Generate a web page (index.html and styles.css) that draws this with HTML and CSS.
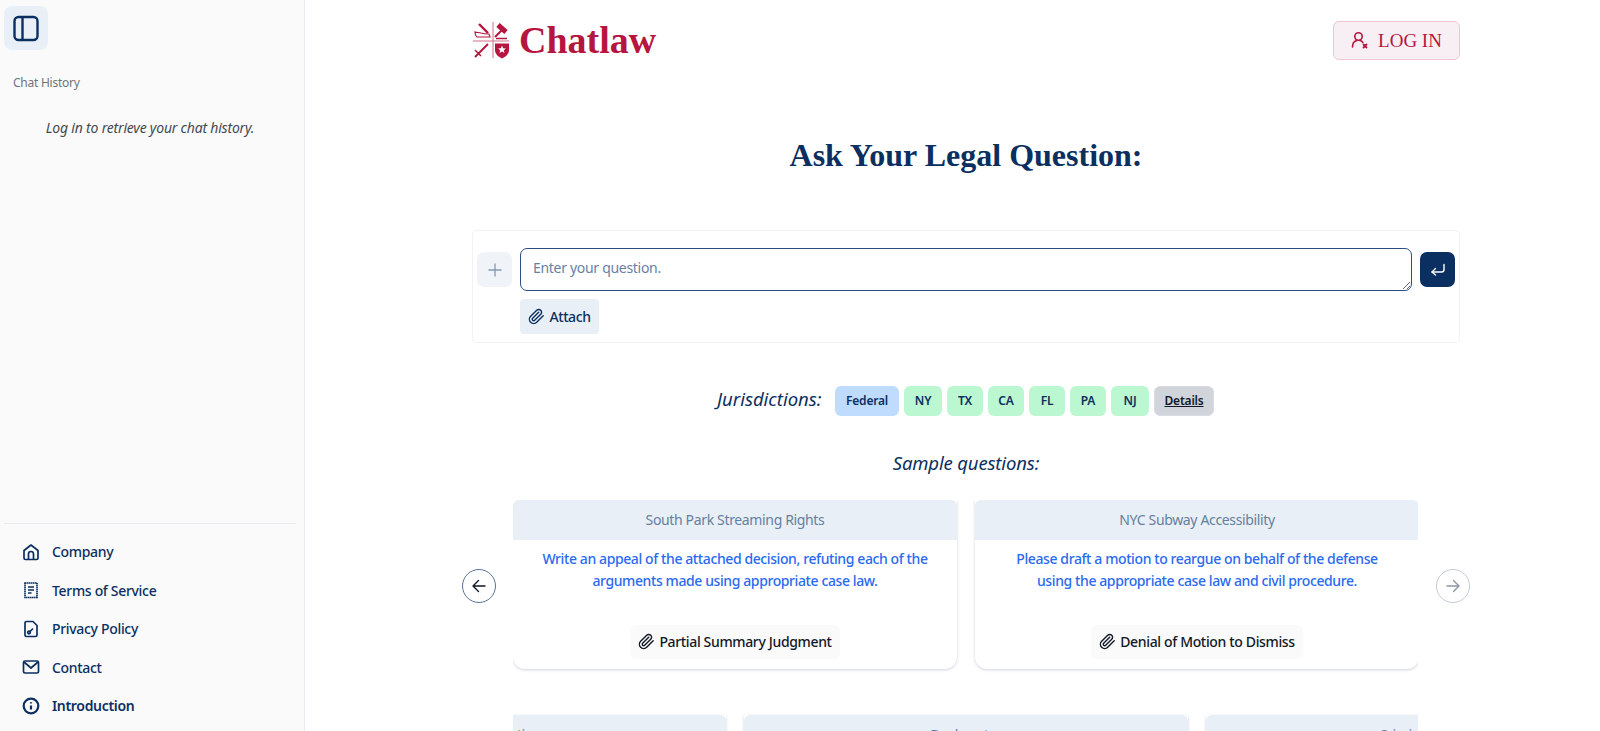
FILE: index.html
```html
<!DOCTYPE html>
<html lang="en">
<head>
  <meta charset="UTF-8">
  <title>Chatlaw</title>
  <link rel="stylesheet" href="styles.css">
</head>
<body>
  <aside class="sidebar">
    <div class="sidebar-top">
      <button class="toggle-btn">
        <svg width="28" height="28" viewBox="0 0 28 28" fill="none" stroke="#0b2f60" stroke-width="2.4"><rect x="2.5" y="3" width="23" height="23" rx="4"/><path d="M10.5 3v23"/></svg>
      </button>
      <div class="history-label">Chat History</div>
      <p class="history-empty">Log in to retrieve your chat history.</p>
    </div>
    <nav class="sidebar-nav">
      <a class="nav-item">
        <svg width="18" height="18" viewBox="0 0 18 18" fill="none" stroke="#0b2f60" stroke-width="1.7" stroke-linejoin="round"><path d="M2 7.5 9 2l7 5.500V15a1.500 1.500 0 0 1-1.500 1.500h-11A1.500 1.500 0 0 1 2 15z"/><path d="M6.500 16.500V11a2.500 2.500 0 0 1 5 0v5.500"/></svg>
        Company
      </a>
      <a class="nav-item">
        <svg width="18" height="18" viewBox="0 0 18 18" fill="none" stroke="#0b2f60" stroke-width="1.7"><path d="M3 2h12v14.500H3z" stroke-dasharray="1.600 .4"/><path d="M6 6h6M6 9h6M6 12h3.500"/></svg>
        Terms of Service
      </a>
      <a class="nav-item">
        <svg width="18" height="18" viewBox="0 0 18 18" fill="none" stroke="#0b2f60" stroke-width="1.7" stroke-linejoin="round"><path d="M4.500 1.500H11l4 4V15a1.500 1.500 0 0 1-1.500 1.500h-9A1.500 1.500 0 0 1 3 15V3a1.500 1.500 0 0 1 1.500-1.500z"/><circle cx="7" cy="12.500" r="1.300"/><path d="m8 11.500 3-3"/></svg>
        Privacy Policy
      </a>
      <a class="nav-item">
        <svg width="18" height="18" viewBox="0 0 18 18" fill="none" stroke="#0b2f60" stroke-width="1.7" stroke-linejoin="round"><rect x="1.500" y="3" width="15" height="12" rx="1.500"/><path d="m2 4 7 6 7-6"/></svg>
        Contact
      </a>
      <a class="nav-item nav-intro">
        <svg width="18" height="18" viewBox="0 0 18 18" fill="none" stroke="#0b2f60" stroke-width="2.2"><circle cx="9" cy="9" r="7.300"/><path d="M9 8.500v4M9 5.200v1.200"/></svg>
        Introduction
      </a>
    </nav>
  </aside>

  <main class="main">
    <header class="topbar">
      <div class="brand">
        <svg class="brand-mark" width="38" height="38" viewBox="1 0 38 38" fill="none" stroke="#b5153f">
          <path d="M22 1v36M2 20h36" stroke="#cf6f88" stroke-width="1"/>
          <path d="M4 11c2 1 4 0 6 1 2 .8 5 1 8 1l1 3H6c-1.500-1-2-3-2-5z" stroke-width="1.200"/>
          <path d="m8 3 9 9" stroke-width="2.400"/>
          <path d="m27 4 8 7" stroke-width="5"/>
          <path d="m31 9-7 7" stroke-width="2"/>
          <path d="M25 17.500h11" stroke-width="1.500"/>
          <path d="M17 23 4 36" stroke-width="2"/>
          <path d="m4 29 6 6" stroke-width="1.500"/>
          <path d="M24 22.500h14v6.500c0 4-3.500 7-7 8.500-3.500-1.500-7-4.500-7-8.500z" fill="#b5153f" stroke="none"/>
          <path d="m31 24.500 1.100 2.700 2.900.2-2.200 1.900.7 2.800-2.500-1.500-2.500 1.500.7-2.800-2.200-1.900 2.900-.2z" fill="#fff" stroke="none"/>
        </svg>
        <span class="brand-name">Chatlaw</span>
      </div>
      <button class="login-btn">
        <svg width="18" height="18" viewBox="0 0 18 18" fill="none" stroke="#b5153f" stroke-width="1.600" stroke-linecap="round"><circle cx="7.500" cy="5.500" r="3.700"/><path d="M1.500 16c0-3.500 2-6 4.500-6.500M9 9.500c1.300.3 2.200 1 2.800 2"/><path d="m12.500 13.500 3 3m0-3-3 3" stroke-width="1.800"/></svg>
        <span class="login-text">LOG IN</span>
      </button>
    </header>

    <h1 class="page-title">Ask Your Legal Question:</h1>

    <section class="ask-panel">
      <div class="ask-row">
        <button class="plus-btn">
          <svg width="16" height="16" viewBox="0 0 16 16" fill="none" stroke="#8298b5" stroke-width="1.300"><path d="M8 1.500v13M1.500 8h13"/></svg>
        </button>
        <textarea class="question-input" placeholder="Enter your question."></textarea>
        <button class="send-btn">
          <svg width="16" height="16" viewBox="0 0 16 16" fill="none" stroke="#fff" stroke-width="1.400" stroke-linecap="round" stroke-linejoin="round"><path d="M14 2.500v5a2.500 2.500 0 0 1-2.500 2.500H2"/><path d="M5.500 6.500 2 10l3.500 3"/></svg>
        </button>
      </div>
      <button class="attach-btn">
        <svg class="clip" width="17" height="17" viewBox="0 0 24 24" fill="none" stroke="currentColor" stroke-width="2" stroke-linecap="round" stroke-linejoin="round"><path d="m21.440 11.050-9.190 9.190a6 6 0 0 1-8.490-8.490l8.570-8.570A4 4 0 1 1 18 8.840l-8.590 8.570a2 2 0 0 1-2.830-2.830l8.490-8.480"/></svg>
        Attach
      </button>
    </section>

    <div class="jurisdictions">
      <span class="jur-label">Jurisdictions:</span>
      <span class="chip chip-federal">Federal</span>
      <span class="chip chip-state chip-ny">NY</span>
      <span class="chip chip-state">TX</span>
      <span class="chip chip-state">CA</span>
      <span class="chip chip-state">FL</span>
      <span class="chip chip-state">PA</span>
      <span class="chip chip-state chip-ny">NJ</span>
      <span class="chip chip-details">Details</span>
    </div>

    <h2 class="samples-title">Sample questions:</h2>

    <section class="carousel">
      <button class="arrow arrow-on">
        <svg width="16" height="16" viewBox="0 0 16 16" fill="none" stroke="currentColor" stroke-width="1.400" stroke-linecap="round" stroke-linejoin="round"><path d="M14 8H2M7.500 2.500 2 8l5.500 5.500"/></svg>
      </button>
      <div class="card-rows">
        <div class="card-row">
          <article class="card">
            <div class="card-head">South Park Streaming Rights</div>
            <p class="card-text">Write an appeal of the attached decision, refuting each of the arguments made using appropriate case law.</p>
            <span class="doc-tag">
              <svg width="17" height="17" viewBox="0 0 24 24" fill="none" stroke="currentColor" stroke-width="2" stroke-linecap="round" stroke-linejoin="round"><path d="m21.440 11.050-9.190 9.190a6 6 0 0 1-8.490-8.490l8.570-8.570A4 4 0 1 1 18 8.840l-8.590 8.570a2 2 0 0 1-2.830-2.830l8.490-8.480"/></svg>
              Partial Summary Judgment
            </span>
          </article>
          <article class="card">
            <div class="card-head">NYC Subway Accessibility</div>
            <p class="card-text">Please draft a motion to reargue on behalf of the defense using the appropriate case law and civil procedure.</p>
            <span class="doc-tag">
              <svg width="17" height="17" viewBox="0 0 24 24" fill="none" stroke="currentColor" stroke-width="2" stroke-linecap="round" stroke-linejoin="round"><path d="m21.440 11.050-9.190 9.190a6 6 0 0 1-8.490-8.490l8.570-8.570A4 4 0 1 1 18 8.840l-8.590 8.570a2 2 0 0 1-2.830-2.830l8.490-8.480"/></svg>
              Denial of Motion to Dismiss
            </span>
          </article>
        </div>
        <div class="card-row card-row-shifted">
          <article class="card"><div class="card-head">Class Action</div></article>
          <article class="card"><div class="card-head">Bankruptcy</div></article>
          <article class="card"><div class="card-head">Criminal Appeal</div></article>
        </div>
      </div>
      <button class="arrow arrow-off">
        <svg width="16" height="16" viewBox="0 0 16 16" fill="none" stroke="currentColor" stroke-width="1.400" stroke-linecap="round" stroke-linejoin="round"><path d="M2 8h12M8.500 2.500 14 8l-5.500 5.500"/></svg>
      </button>
    </section>
  </main>
</body>
</html>
```

FILE: styles.css
```css
* {
  box-sizing: border-box;
  margin: 0;
  padding: 0;
}

html, body {
  height: 731px;
  overflow: hidden;
}

body {
  display: flex;
  font-family: "Noto Sans", sans-serif;
  background: white;
  color: #0b2f60;
}

button {
  border: none;
  font-family: inherit;
  display: flex;
  align-items: center;
  justify-content: center;
}

/* sidebar */
.sidebar {
  width: 305px;
  flex-shrink: 0;
  height: 731px;
  background: #fafafa;
  border-right: 1px solid #e8edf5;
  padding: 6px 8px 0 4px;
  display: flex;
  flex-direction: column;
  justify-content: space-between;
}

.toggle-btn {
  width: 44px;
  height: 44px;
  border-radius: 8px;
  background: #e9eff6;
}

.history-label {
  margin: 25px 0 0 9px;
  font-size: 12px;
  line-height: 16px;
  letter-spacing: -0.25px;
  color: #6f7479;
}

.history-empty {
  margin-top: 27px;
  text-align: center;
  font-style: italic;
  font-size: 14px;
  line-height: 20px;
  letter-spacing: -0.2px;
  color: #45494f;
}

.sidebar-nav {
  border-top: 1px solid #e8ebef;
  padding: 9px 0 6px 18px;
}

.nav-item {
  height: 38.500px;
  display: flex;
  align-items: center;
  gap: 12px;
  font-size: 14px;
  font-weight: 500;
  letter-spacing: -0.32px;
  color: #0b2f60;
}

.nav-intro {
  font-weight: 600;
}

/* main column */
.main {
  flex: 1;
  padding: 0 139px 0 157px;
  min-width: 0;
}

.main > * {
  width: 1008px;
}

.topbar {
  height: 80px;
  width: 988px;
  margin-left: 10px;
  display: flex;
  align-items: center;
  justify-content: space-between;
}

.brand {
  display: flex;
  align-items: center;
  gap: 9px;
}

.brand-name {
  font-family: "Liberation Serif", serif;
  font-size: 38px;
  font-weight: 700;
  color: #b5153f;
}

.login-btn {
  width: 127px;
  height: 39px;
  gap: 9px;
  border: 1px solid #eec6d2;
  border-radius: 6px;
  background: #f7eff3;
  color: #b5153f;
  font-family: "Liberation Serif", serif;
  font-size: 19px;
}

.login-text {
  padding-top: 2px;
}

.page-title {
  margin: 54px 0 0;
  height: 42px;
  text-align: center;
  font-family: "Liberation Serif", serif;
  font-size: 32px;
  line-height: 42px;
  font-weight: 700;
  color: #0b2f60;
}

.ask-panel {
  width: 988px;
  margin: 54px 0 0 10px;
  height: 113px;
  border: 1px solid #f1f2f4;
  border-radius: 4px;
  padding: 17px 4px 0;
}

.ask-row {
  display: flex;
  gap: 8px;
  align-items: flex-start;
}

.plus-btn, .send-btn {
  width: 35px;
  height: 35px;
  border-radius: 7px;
  margin-top: 4px;
}

.plus-btn {
  background: #f0f4f8;
}

.send-btn {
  background: #0b2f60;
}

.question-input {
  flex: 1;
  height: 43px;
  border: 1px solid #2c4f80;
  border-radius: 7px;
  padding: 9px 12px;
  font-family: inherit;
  font-size: 14px;
  line-height: 20px;
  letter-spacing: -0.3px;
}

.question-input::placeholder {
  color: #6780a5;
}

.attach-btn {
  margin: 8px 0 0 43px;
  width: 79px;
  height: 35px;
  gap: 4px;
  padding-bottom: 1px;
  border-radius: 4px;
  background: #e9eff6;
  color: #0b2f60;
  font-size: 14px;
  font-weight: 500;
  letter-spacing: -0.4px;
}

.clip {
  flex-shrink: 0;
}

.jurisdictions {
  margin-top: 43px;
  height: 30px;
  display: flex;
  align-items: center;
  gap: 5px;
  padding-left: 255px;
}

.jur-label {
  font-size: 18.500px;
  font-style: italic;
  width: 113px;
  padding-bottom: 5px;
}

.chip {
  height: 30px;
  display: flex;
  align-items: center;
  justify-content: center;
  width: 36px;
  padding-bottom: 2px;
  border-radius: 6px;
  font-size: 12px;
  font-weight: 600;
  letter-spacing: -0.2px;
  color: #0b2f60;
}

.chip-federal {
  width: 64px;
  background: #bfdbfe;
}

.chip-state {
  background: #bbf7d0;
}

.chip-ny {
  width: 38px;
}

.chip-details {
  width: 60px;
  background: #d1d5db;
  border: 1px solid #d9dce1;
  color: #111827;
  text-decoration: underline;
}

.samples-title {
  margin-top: 32px;
  height: 30px;
  text-align: center;
  font-size: 18.500px;
  line-height: 30px;
  font-weight: 400;
  font-style: italic;
  letter-spacing: -0.15px;
}

/* carousel */
.carousel {
  margin-top: 22px;
  display: flex;
  align-items: flex-start;
  width: 1008px;
}

.arrow {
  width: 34px;
  height: 34px;
  margin-top: 69px;
  flex-shrink: 0;
  border-radius: 50%;
  background: white;
}

.arrow-on {
  border: 1px solid #5a7397;
  color: #111827;
}

.arrow-off {
  margin-left: 18px;
  border: 1px solid #c3ccd9;
  color: #8d96a3;
}

.card-rows {
  width: 905px;
  margin-left: 17px;
  overflow: hidden;
  padding-bottom: 10px;
  display: flex;
  flex-direction: column;
  gap: 46px;
}

.card-row {
  display: flex;
  gap: 18px;
}

.card-row-shifted {
  margin-left: -231px;
}

.card {
  width: 444px;
  height: 169px;
  flex-shrink: 0;
  background: white;
  border-radius: 0 0 12px 12px;
  box-shadow: 0 1px 3px rgba(30, 50, 90, 0.22);
  text-align: center;
}

.card-head {
  height: 40px;
  line-height: 39px;
  background: #e9eff6;
  border-radius: 6px 6px 0 0;
  font-size: 14px;
  letter-spacing: -0.35px;
  color: #64809f;
}

.card-text {
  height: 85px;
  padding: 8px 28px 0;
  font-size: 14px;
  line-height: 21.500px;
  font-weight: 500;
  letter-spacing: -0.4px;
  color: #2a6af0;
}

.doc-tag {
  display: inline-flex;
  align-items: center;
  gap: 4px;
  height: 34px;
  padding: 0 8px 1px;
  border-radius: 6px;
  background: #fafafa;
  font-size: 14px;
  font-weight: 500;
  letter-spacing: -0.35px;
  color: #111827;
}
```
